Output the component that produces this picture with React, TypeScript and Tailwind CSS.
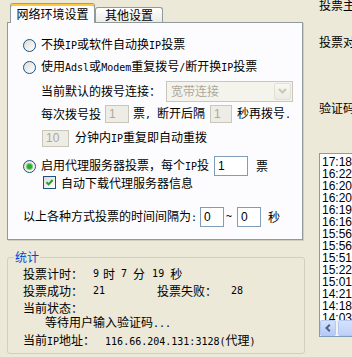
import React from 'react';

const cjk = "font-['Noto_Sans_CJK_SC',sans-serif]";

// half-width latin, roughly like SimSun's 6px cells
const M = ({ children, className = '' }: { children: React.ReactNode; className?: string }) => (
  <span className={`font-['DejaVu_Sans_Mono',monospace] text-[10px] ${className}`}>{children}</span>
);

const Radio = ({ checked }: { checked?: boolean }) => (
  <span className="w-[13px] h-[13px] shrink-0 rounded-full border border-[#1C5180] bg-linear-to-br from-[#DCDCD7] to-white flex items-center justify-center">
    {checked && <span className="w-[5px] h-[5px] rounded-full bg-[#2DAA2D] shadow-[0_0_0_1px_#7ACB7A]" />}
  </span>
);

const Checkbox = () => (
  <span className="w-[13px] h-[13px] shrink-0 border border-[#1C5180] bg-linear-to-br from-[#DCDCD7] to-white flex items-center justify-center">
    <svg width="9" height="9" viewBox="0 0 9 9">
      <path d="M1.5 4.2 L3.6 6.4 L7.6 2" fill="none" stroke="#21A121" strokeWidth="2" />
    </svg>
  </span>
);

const Field = ({ value, disabled, className = '' }: { value: string; disabled?: boolean; className?: string }) => (
  <span
    className={`shrink-0 flex items-center pl-[3px] border ${
      disabled ? 'border-[#C9C7BA] bg-[#EEEDE5] text-[#ACA899]' : 'border-[#7F9DB9] bg-white text-black'
    } ${className}`}
  >
    <span className="font-['Liberation_Sans',sans-serif] text-[12px] leading-[12px]">{value}</span>
  </span>
);

const times = ['17:18', '16:22', '16:20', '16:20', '16:19', '16:16', '15:56', '15:56', '15:51', '15:22', '15:01', '14:21', '14:18', '14:03'];

export default function App() {
  return (
    <div className={`w-[352px] h-[357px] bg-[#ECE9D8] flex overflow-hidden text-[12px] text-black ${cjk}`}>
      {/* left column */}
      <div className="w-[305px] shrink-0 flex flex-col">
        {/* tabs */}
        <div className="h-[22px] pl-[10px] flex items-end relative z-10">
          <div className="w-[85px] h-[20px] -mb-[1px] rounded-t-[3px] border-t border-x border-[#E68B2C] border-x-[#919B9C] bg-[#FCFCFE] shadow-[inset_0_2px_0_#FFC73C] flex justify-center pt-[3px]">
            <span className="leading-[14px]">网络环境设置</span>
          </div>
          <div className="w-[68px] h-[15px] rounded-t-[3px] border-t border-x border-[#919B9C] bg-linear-to-b from-white to-[#ECEBE6] flex justify-center items-center">
            <span className="leading-[14px]">其他设置</span>
          </div>
        </div>

        {/* tab page */}
        <div className="ml-[7px] w-[296px] h-[218px] border border-[#919B9C] bg-[#FCFCFE] shadow-[1px_1px_0_#D0CEBF] flex flex-col leading-[16px]">
          <div className="mt-[14px] h-[16px] pl-[15px] flex items-center">
            <Radio />
            <span className="ml-[5px]">
              不换<M>IP</M>或软件自动换<M>IP</M>投票
            </span>
          </div>
          <div className="mt-[6px] h-[16px] pl-[15px] flex items-center">
            <Radio />
            <span className="ml-[5px]">
              使用<M>Adsl</M>或<M>Modem</M>重复拨号<M>/</M>断开换<M>IP</M>投票
            </span>
          </div>
          <div className="mt-[5px] h-[22px] pl-[33px] flex items-center">
            <span>当前默认的拨号连接：</span>
            <div className="ml-[5px] w-[127px] h-[21px] border border-[#C9C7BA] bg-[#F5F4EC] flex items-center">
              <span className="flex-1 pl-[4px] text-[#ACA899]">宽带连接</span>
              <span className="w-[17px] h-[17px] mr-[1px] rounded-[2px] border border-[#E2E0D4] bg-linear-to-b from-[#F8F7F2] to-[#ECEBE3] flex items-center justify-center">
                <svg width="9" height="6" viewBox="0 0 9 6">
                  <path d="M1 1 L4.5 4.5 L8 1" fill="none" stroke="#C9C7BA" strokeWidth="2" />
                </svg>
              </span>
            </div>
          </div>
          <div className="mt-[2px] h-[20px] pl-[33px] flex items-center">
            <span>每次拨号投</span>
            <Field value="1" disabled className="ml-[4px] w-[24px] h-[18px]" />
            <span className="ml-[4px]">
              票<M className="whitespace-pre">, </M>断开后隔
            </span>
            <Field value="1" disabled className="ml-[5px] w-[22px] h-[18px]" />
            <span className="ml-[5px]">
              秒再拨号<M>.</M>
            </span>
          </div>
          <div className="mt-[5px] h-[18px] pl-[34px] flex items-center">
            <Field value="10" disabled className="w-[27px] h-[17px]" />
            <span className="ml-[6px]">
              分钟内<M>IP</M>重复即自动重拨
            </span>
          </div>
          <div className="mt-[9px] h-[20px] pl-[15px] flex items-center">
            <Radio checked />
            <span className="ml-[5px]">
              启用代理服务器投票，每个<M>IP</M>投
            </span>
            <Field value="1" className="ml-[5px] w-[34px] h-[20px]" />
            <span className="ml-[8px]">票</span>
          </div>
          <div className="h-[13px] pl-[35px] flex items-center">
            <Checkbox />
            <span className="ml-[5px]">自动下载代理服务器信息</span>
          </div>
          <div className="mt-[18px] h-[20px] pl-[15px] flex items-center">
            <span>
              以上各种方式投票的时间间隔为<M>:</M>
            </span>
            <Field value="0" className="ml-[3px] w-[24px] h-[20px]" />
            <M className="ml-[2px]">~</M>
            <Field value="0" className="ml-[5px] w-[24px] h-[20px]" />
            <span className="ml-[7px]">秒</span>
          </div>
        </div>

        {/* stats group */}
        <fieldset className="mt-[11px] ml-[7px] w-[298px] h-[103px] border border-[#D0D0BF] rounded-[3px] flex flex-col leading-[16px]">
          <legend className="ml-[6px] px-[1px] leading-[12px] text-[#0046D5]">统计</legend>
          <div className="mt-[3px] h-[16px] pl-[15px] flex items-center">
            <span>投票计时：</span>
            <M className="ml-[10px]">9</M>
            <span className="ml-[4px]">时</span>
            <M className="ml-[6px]">7</M>
            <span className="ml-[6px]">分</span>
            <M className="ml-[7px]">19</M>
            <span className="ml-[6px]">秒</span>
          </div>
          <div className="mt-[1px] h-[16px] pl-[15px] flex items-center">
            <span>投票成功：</span>
            <M className="ml-[10px]">21</M>
            <span className="ml-[52px]">投票失败：</span>
            <M className="ml-[14px]">28</M>
          </div>
          <div className="mt-[1px] h-[16px] pl-[15px] flex items-center">
            <span>当前状态：</span>
          </div>
          <div className="-mt-[1px] h-[16px] pl-[37px] flex items-center">
            <span>
              等待用户输入验证码<M>...</M>
            </span>
          </div>
          <div className="mt-[2px] h-[16px] pl-[15px] flex items-center">
            <span>
              当前<M>IP</M>地址：
            </span>
            <span className="ml-[10px]">
              <M>116.66.204.131:3128(</M>代理<M>)</M>
            </span>
          </div>
        </fieldset>
      </div>

      {/* right column */}
      <div className="flex-1 pl-[14px] flex flex-col leading-[12px]">
        <span className="-mt-[1px] whitespace-nowrap">投票主</span>
        <span className="mt-[25px] whitespace-nowrap">投票对</span>
        <span className="mt-[54px] whitespace-nowrap">验证码</span>
        <div className="mt-[39px] w-[60px] h-[184px] shrink-0 border border-[#7F9DB9] bg-white flex flex-col">
          <div className="flex-1 overflow-hidden pt-[2px] pl-[2px] font-['Liberation_Sans',sans-serif] text-[12px] leading-[12px]">
            {times.map((t, i) => (
              <div key={i}>{t}</div>
            ))}
          </div>
          <div className="h-[16px] shrink-0 flex bg-[#F4F3EE]">
            <span className="w-[16px] h-[16px] rounded-[2px] border border-[#B4C8F6] bg-linear-to-b from-[#D6E2FD] to-[#B5C9F7] flex items-center justify-center">
              <svg width="6" height="8" viewBox="0 0 6 8">
                <path d="M4.8 0.8 L1.5 4 L4.8 7.2" fill="none" stroke="#4D6185" strokeWidth="2" />
              </svg>
            </span>
            <span className="ml-[2px] flex-1 h-[16px] rounded-[2px] border border-[#B4C8F6] bg-linear-to-b from-[#D6E2FD] to-[#BFD0F9]" />
          </div>
        </div>
      </div>
    </div>
  );
}
